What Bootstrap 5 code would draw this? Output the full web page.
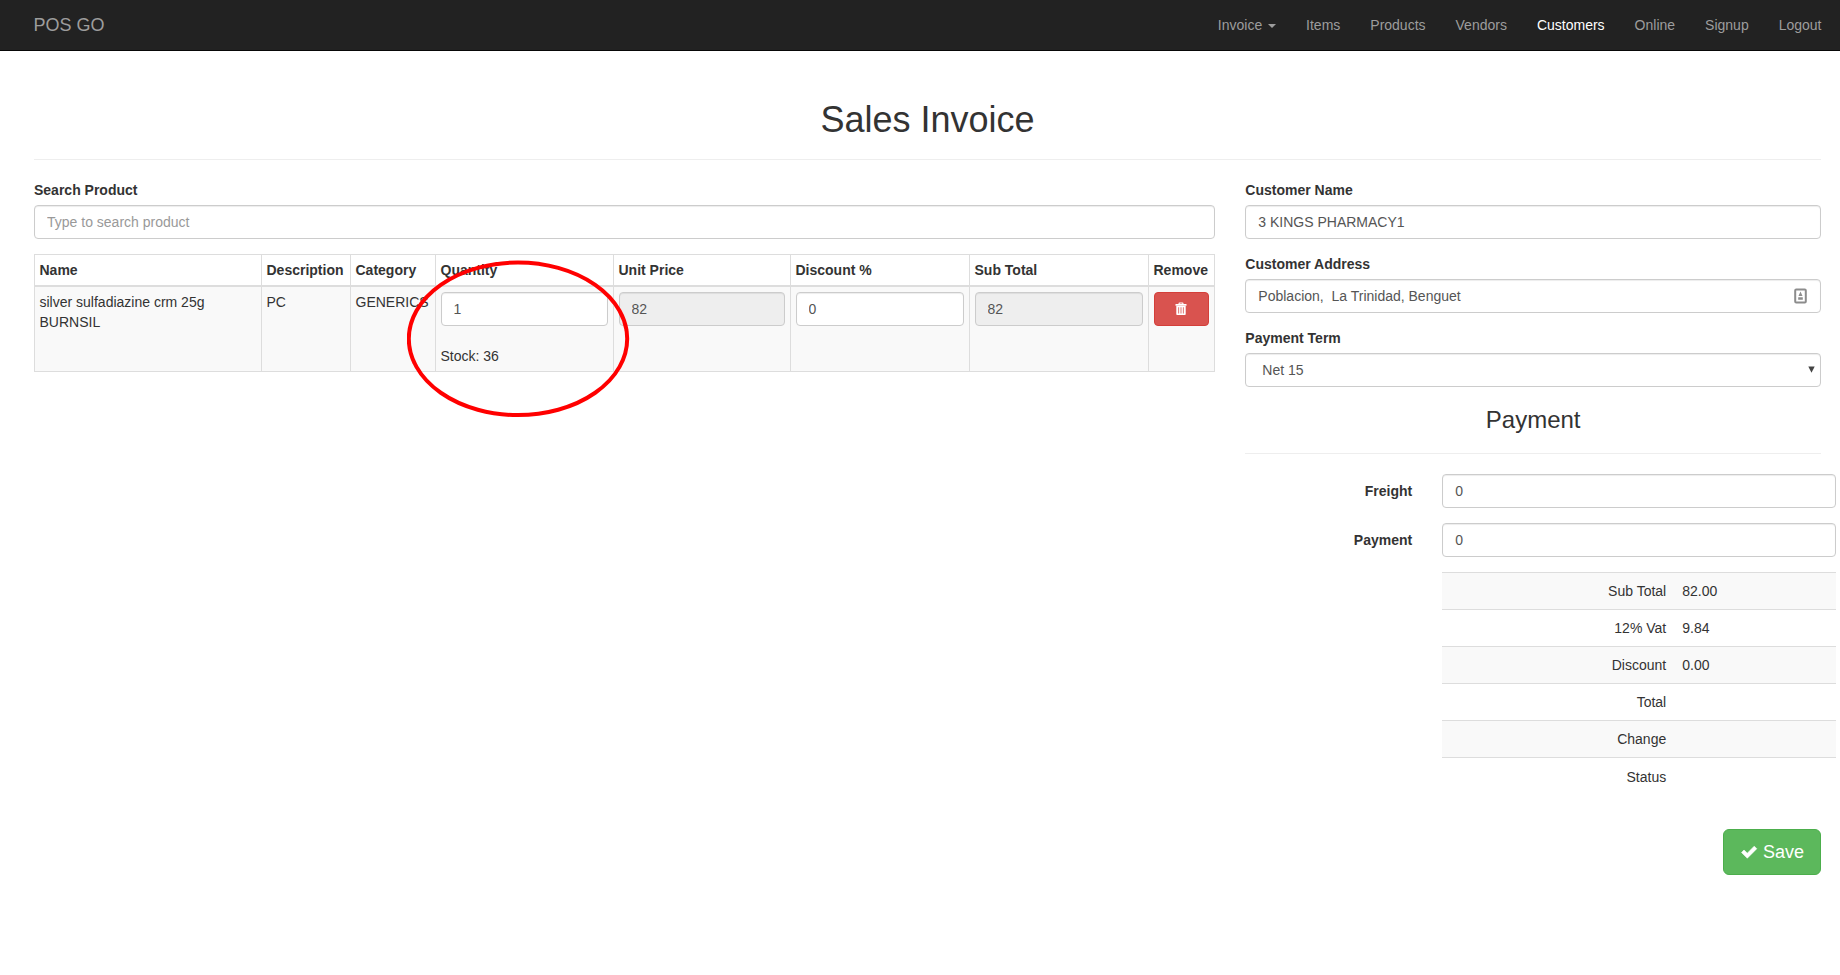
<!DOCTYPE html>
<html lang="en">
<head>
<meta charset="utf-8">
<meta name="viewport" content="width=device-width, initial-scale=1">
<title>POS GO</title>
<link href="https://cdn.jsdelivr.net/npm/bootstrap@5.3.0/dist/css/bootstrap.min.css" rel="stylesheet">
<style>
  body { font-family: "Liberation Sans", Arial, sans-serif; font-size: 14px; line-height: 20px; color: #333; overflow: hidden; }
  .row { --bs-gutter-x: 30px; }
  .topbar { background: #222; border-bottom: 1px solid #080808; height: 51px; padding: 0 3.5px 0 33.5px; }
  .topbar .navbar-brand { font-size: 18px; line-height: 20px; color: #9d9d9d; padding: 15px 0; margin: 0; }
  .topbar .nav-link { color: #9d9d9d; padding: 15px; line-height: 20px; }
  .topbar .nav-link.active { color: #fff; }
  .caret { display: inline-block; margin-left: 2px; vertical-align: middle; border-top: 4px solid; border-left: 4px solid transparent; border-right: 4px solid transparent; }
  .page { padding: 49px 19px 0 34px; }
  h1 { font-size: 36px; line-height: 39px; font-weight: 400; margin: 0; }
  h3 { font-size: 24px; line-height: 26.4px; font-weight: 400; margin: 20px 0 0; }
  hr { margin: 20px 0; border-top: 1px solid #eee; opacity: 1; }
  .form-label { font-weight: 700; margin-bottom: 5px; display: block; }
  .form-control { height: 34px; padding: 6px 12px; font-size: 14px; line-height: 20px; color: #555; border: 1px solid #ccc; border-radius: 4px; box-shadow: inset 0 1px 1px rgba(0,0,0,.075); background: #fff; }
  .form-control::placeholder { color: #999; }
  .form-control:disabled { background: #eee; color: #555; }
  .group { margin-bottom: 15px; }
  .items { table-layout: fixed; width: 1181px; border-collapse: collapse; margin: 0; }
  .items th, .items td { border: 1px solid #ddd; padding: 5px 5px 5px 4.5px; vertical-align: top; text-align: left; }
  .items th { border-bottom-width: 2px; white-space: nowrap; }
  .items td { background: #f9f9f9; }
  .del { width: 100%; height: 34px; background: #d9534f; border: 1px solid #d43f3a; border-radius: 4px; padding: 0; display: flex; align-items: center; justify-content: center; }
  .marker { position: absolute; left: 407px; top: 260px; pointer-events: none; }
  .wide { margin-left: -30px; margin-right: -30px; }
  .wide .form-label { padding-top: 7px; margin: 0; }
  .totals { width: 100%; border-collapse: collapse; margin-bottom: 34px; }
  .totals td { border-top: 1px solid #ddd; padding: 8px; height: 37px; }
  .totals tr:nth-child(odd) td { background: #f9f9f9; }
  .totals td:first-child { width: 232px; text-align: right; }
  .save { background: #5cb85c; border: 1px solid #4cae4c; border-radius: 6px; color: #fff; font-size: 18px; line-height: 24px; padding: 10px 16px; height: 46px; }
  .end-icon { position: absolute; pointer-events: none; }
  .end-icon.contact { right: 13.500px; top: 9px; }
  .end-icon.arrow { right: 5.500px; top: 13px; }
</style>
</head>
<body>
<nav class="topbar d-flex justify-content-between">
  <a class="navbar-brand" href="#">POS GO</a>
  <div class="nav flex-nowrap">
    <a class="nav-link" href="#">Invoice <span class="caret"></span></a>
    <a class="nav-link" href="#">Items</a>
    <a class="nav-link" href="#">Products</a>
    <a class="nav-link" href="#">Vendors</a>
    <a class="nav-link active" href="#">Customers</a>
    <a class="nav-link" href="#">Online</a>
    <a class="nav-link" href="#">Signup</a>
    <a class="nav-link" href="#">Logout</a>
  </div>
</nav>
<main class="page">
  <h1 class="text-center">Sales Invoice</h1>
  <hr>
  <div class="row">
    <div class="col-8">
      <div class="group">
        <label class="form-label" for="search">Search Product</label>
        <input class="form-control" id="search" placeholder="Type to search product">
      </div>
      <table class="items">
        <colgroup><col style="width:227px"><col style="width:89px"><col style="width:85px"><col style="width:178px"><col style="width:177px"><col style="width:179px"><col style="width:179px"><col></colgroup>
        <thead>
          <tr><th>Name</th><th>Description</th><th>Category</th><th>Quantity</th><th>Unit Price</th><th>Discount %</th><th>Sub Total</th><th>Remove</th></tr>
        </thead>
        <tbody>
          <tr>
            <td>silver sulfadiazine crm 25g BURNSIL</td>
            <td>PC</td>
            <td>GENERICS</td>
            <td><input class="form-control" value="1"><br>Stock: 36</td>
            <td><input class="form-control" value="82" disabled></td>
            <td><input class="form-control" value="0"></td>
            <td><input class="form-control" value="82" disabled></td>
            <td>
              <button class="del" aria-label="Remove">
                <svg width="12" height="14" viewBox="0 0 12 14"><path fill="#fff" fill-rule="evenodd" d="M3.500 1.500Q3.500 .5 4.500 .5H7.500Q8.500 .5 8.500 1.500V2H11.500V3.700H.5V2H3.500ZM4.700 2H7.300V1.500H4.700ZM1.300 4H10.700V12.200Q10.700 13 9.900 13H2.100Q1.300 13 1.300 12.200ZM3.300 5.300V11.500H4.100V5.300ZM5.600 5.300V11.500H6.400V5.300ZM7.900 5.300V11.500H8.700V5.300Z"/></svg>
              </button>
            </td>
          </tr>
        </tbody>
      </table>
    </div>
    <div class="col-4">
      <div class="group">
        <label class="form-label" for="cname">Customer Name</label>
        <input class="form-control" id="cname" value="3 KINGS PHARMACY1">
      </div>
      <div class="group">
        <label class="form-label" for="addr">Customer Address</label>
        <div class="position-relative">
          <input class="form-control" id="addr" value="Poblacion,  La Trinidad, Benguet">
          <svg class="end-icon contact" width="13" height="16" viewBox="0 0 13 16"><rect x="1.200" y="1.500" width="10.600" height="13" rx="1" fill="#fff" stroke="#8c8c8c" stroke-width="2"/><path d="M6.500 3.600L8.500 8H4.500ZM4.200 9.300h4.600v2.400H4.200Z" fill="#8c8c8c"/></svg>
        </div>
      </div>
      <div class="group">
        <label class="form-label">Payment Term</label>
        <div class="position-relative">
          <div class="form-control ps-3">Net 15</div>
          <svg class="end-icon arrow" width="7" height="7" viewBox="0 0 7 7"><path d="M.3 .5h6.400L3.500 6.800Z" fill="#444"/></svg>
        </div>
      </div>
      <h3 class="text-center">Payment</h3>
      <hr>
      <div class="row wide group">
        <label class="col-4 form-label text-end" for="freight">Freight</label>
        <div class="col-8"><input class="form-control" id="freight" value="0"></div>
      </div>
      <div class="row wide group">
        <label class="col-4 form-label text-end" for="pay">Payment</label>
        <div class="col-8"><input class="form-control" id="pay" value="0"></div>
      </div>
      <div class="row wide">
        <div class="col-8 offset-4">
          <table class="totals">
            <tbody>
              <tr><td>Sub Total</td><td>82.00</td></tr>
              <tr><td>12% Vat</td><td>9.84</td></tr>
              <tr><td>Discount</td><td>0.00</td></tr>
              <tr><td>Total</td><td></td></tr>
              <tr><td>Change</td><td></td></tr>
              <tr><td>Status</td><td></td></tr>
            </tbody>
          </table>
        </div>
      </div>
      <div class="text-end">
        <button class="save"><svg width="18" height="16" viewBox="0 0 18 16"><path d="M1.500 7.500L4 5L7.300 8.200L14.200 1.200L16.800 3.700L7.300 13.200Z" fill="#fff" stroke="#fff" stroke-width=".6" stroke-linejoin="round"/></svg> Save</button>
      </div>
    </div>
  </div>
</main>
<svg class="marker" width="224" height="160" viewBox="0 0 224 160"><ellipse cx="111" cy="78.800" rx="109.200" ry="76.300" fill="none" stroke="#f00" stroke-width="4"/></svg>
<script src="https://cdn.jsdelivr.net/npm/bootstrap@5.3.0/dist/js/bootstrap.bundle.min.js"></script>
</body>
</html>
